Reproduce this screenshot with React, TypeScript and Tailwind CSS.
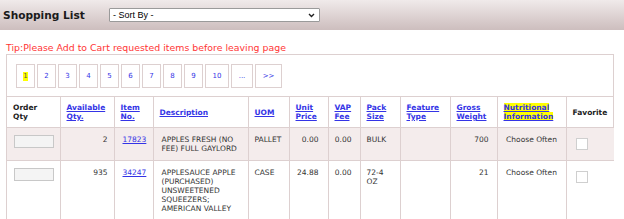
import React from 'react'

const cols = [53, 54, 39, 95, 41, 39, 32, 40, 50, 47, 69, 48]

const pages = ['1', '2', '3', '4', '5', '6', '7', '8', '9', '10', '...', '>>']

interface Item {
  avail: string
  itemNo: string
  desc: string
  uom: string
  price: string
  vap: string
  pack: string
  gross: string
}

const items: Item[] = [
  { avail: '2', itemNo: '17823', desc: 'APPLES FRESH (NO FEE) FULL GAYLORD', uom: 'PALLET', price: '0.00', vap: '0.00', pack: 'BULK', gross: '700' },
  { avail: '935', itemNo: '34247', desc: 'APPLESAUCE APPLE (PURCHASED) UNSWEETENED SQUEEZERS; AMERICAN VALLEY', uom: 'CASE', price: '24.88', vap: '0.00', pack: '72-4 OZ', gross: '21' },
]

function HeadLink({ children, hl }: { children: React.ReactNode; hl?: boolean }) {
  return (
    <a className={`font-bold text-[#3434e6] underline ${hl ? 'bg-[#ffff00]' : ''}`}>{children}</a>
  )
}

export default function App() {
  const cell = 'border-t border-l border-[#ddd0d0] px-[6px] py-[7px] align-top'
  const head = 'border-l border-[#ddd0d0] px-[6px] py-[6px] align-middle text-left'
  return (
    <div className="w-[624px] h-[219px] overflow-hidden bg-white text-[7.5px] leading-[9px] text-[#333]" style={{ fontFamily: '"DejaVu Sans", Verdana, sans-serif' }}>
      <div className="h-[30px] flex items-center bg-gradient-to-b from-[#f0eaea] to-[#cdbebe] pl-[3px]">
        <span className="w-[106px] text-[10.6px] font-bold text-[#1a1a1a]">Shopping List</span>
        <div className="w-[211px] h-[14px] bg-white border border-[#9a9a9a] rounded-[1px] flex items-center justify-between pl-[3px] pr-[4px]" style={{ fontFamily: '"Liberation Sans", Arial, sans-serif' }}>
          <span className="text-[9px] text-black">- Sort By -</span>
          <svg width="7" height="5" viewBox="0 0 7 5">
            <path d="M1 1 L3.5 3.5 L6 1" stroke="#222" strokeWidth="1.4" fill="none" />
          </svg>
        </div>
      </div>

      <div className="pl-[6px] pt-[12px] text-[9.4px] leading-[11px] text-[#ff3535]">
        Tip:Please Add to Cart requested items before leaving page
      </div>

      <div className="ml-[6px] mt-[1px] w-[608px] border border-[#ddd0d0]">
        <div className="flex gap-[2px] pl-[9px] pt-[9px] pb-[8px]">
          {pages.map((p, i) => (
            <div
              key={p}
              className={`h-[24px] border border-[#ddd0d0] flex items-center justify-center text-[7px] text-[#3434e6] ${i < 9 ? 'w-[19px]' : i === 9 ? 'w-[24px]' : i === 10 ? 'w-[22px]' : 'w-[27px]'}`}
            >
              <span className={i === 0 ? 'bg-[#ffff00] text-[#555]' : ''}>{p}</span>
            </div>
          ))}
        </div>

        <table className="table-fixed border-collapse w-[606px]">
          <colgroup>
            {cols.map((w, i) => (
              <col key={i} style={{ width: w }} />
            ))}
          </colgroup>
          <thead>
            <tr className="border-t border-[#ddd0d0]">
              <th className={`${head} border-l-0 font-bold text-[#222]`}>Order<br />Qty</th>
              <th className={head}><HeadLink>Available<br />Qty.</HeadLink></th>
              <th className={head}><HeadLink>Item<br />No.</HeadLink></th>
              <th className={head}><HeadLink>Description</HeadLink></th>
              <th className={head}><HeadLink>UOM</HeadLink></th>
              <th className={head}><HeadLink>Unit<br />Price</HeadLink></th>
              <th className={head}><HeadLink>VAP<br />Fee</HeadLink></th>
              <th className={head}><HeadLink>Pack<br />Size</HeadLink></th>
              <th className={head}><HeadLink>Feature<br />Type</HeadLink></th>
              <th className={head}><HeadLink>Gross<br />Weight</HeadLink></th>
              <th className={`${head} text-center`}><HeadLink hl>Nutritional<br />Information</HeadLink></th>
              <th className={`${head} text-center font-bold text-[#222]`}>Favorite</th>
            </tr>
          </thead>
          <tbody>
            {items.map((it, r) => (
              <tr key={it.itemNo} className={r === 0 ? 'bg-[#f4ecec]' : 'bg-white'}>
                <td className={`${cell} border-l-0 pl-[7px]`}>
                  <div className="w-[40px] h-[13px] bg-[#f4f4f4] border border-[#c8c8c8]" />
                </td>
                <td className={`${cell} text-right`}>{it.avail}</td>
                <td className={`${cell} pl-[8px]`}><a className="text-[#3434e6] underline">{it.itemNo}</a></td>
                <td className={`${cell} pl-[8px] pr-[4px]`}>{it.desc}</td>
                <td className={cell}>{it.uom}</td>
                <td className={`${cell} text-right pr-[9px]`}>{it.price}</td>
                <td className={`${cell} text-right pr-[8px]`}>{it.vap}</td>
                <td className={cell}>{it.pack}</td>
                <td className={cell}></td>
                <td className={`${cell} text-right pr-[8px]`}>{it.gross}</td>
                <td className={`${cell} text-center px-[2px] whitespace-nowrap`}>Choose Often</td>
                <td className={`${cell} pl-[9px] pt-[10px]`}>
                  <div className="w-[12px] h-[12px] bg-white border border-[#cfcfcf]" />
                </td>
              </tr>
            ))}
          </tbody>
        </table>
      </div>
    </div>
  )
}
